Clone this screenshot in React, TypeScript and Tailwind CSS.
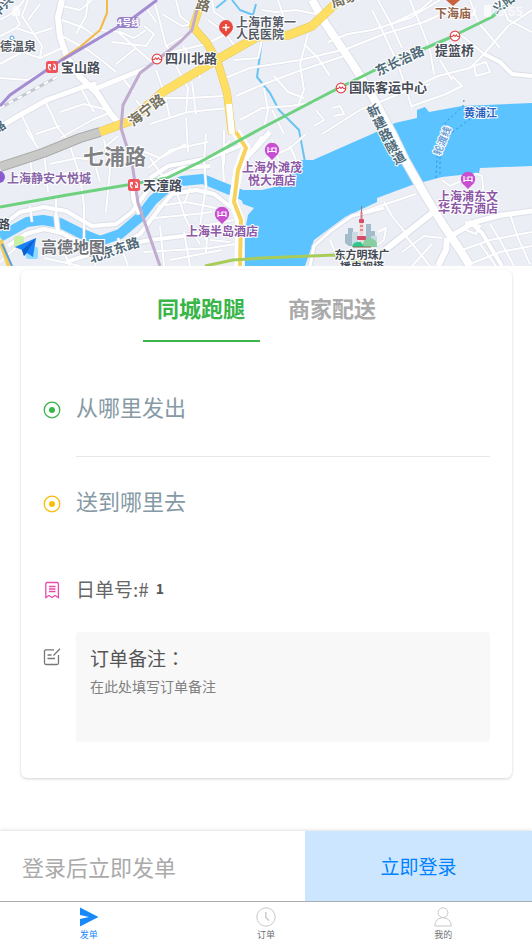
import { useState } from "react";
import type { ReactNode } from "react";

// minor streets, thin white
const streets = [
  "M0 20 L14 12 L24 0", "M0 36 L16 28 L34 34 L52 28", "M0 64 L22 52 L40 58 L62 48", "M14 12 L20 24 L16 28",
  "M28 0 L22 16 L34 34", "M0 78 L28 80 L52 66", "M34 34 L42 46 L40 58", "M40 4 L28 20", "M62 20 L84 28 L100 40",
  "M62 36 L88 50 L104 62 L116 72", "M62 6 L80 10 L92 0", "M88 0 L86 16 L76 34", "M100 30 L120 32 L134 38 L146 30",
  "M112 42 L146 46 L154 34 L144 26", "M118 32 L138 50 L154 64", "M136 48 L116 64", "M154 0 L160 22 L166 46 L176 56",
  "M162 14 L182 26 L194 24", "M146 8 L156 22", "M176 0 L180 16 L190 24", "M166 46 L184 36", "M172 52 L206 44 L234 30",
  "M183 46 L192 60", "M208 20 L224 32 L238 50", "M212 0 L214 12 L232 24", "M156 70 L164 92 L170 118",
  "M176 66 L188 88 L186 112", "M192 82 L196 114", "M160 98 L188 98 L224 96", "M150 124 L188 112 L228 108",
  "M196 60 L200 78", "M46 103 L58 128 L66 138", "M22 116 L34 140", "M82 90 L94 112", "M60 112 L84 104 L108 110",
  "M60 138 L92 120 L112 112", "M124 80 L134 92", "M80 79 L96 90 L140 72", "M136 100 L150 118", "M36 134 L60 126",
  "M236 96 L264 84 L296 72 L350 54", "M225 78 L250 68 L300 60 L350 48", "M234 60 L258 58 L262 40",
  "M240 120 L262 108 L290 106 L316 102", "M264 128 L268 110 L264 88", "M284 134 L272 110", "M308 34 L300 64 L304 90 L298 106",
  "M274 76 L288 92 L304 98", "M304 44 L318 58 L330 76", "M262 10 L276 12 L296 10 L316 14", "M278 0 L286 24",
  "M322 134 L360 110 L404 92 L430 84", "M328 42 L348 34 L372 30 L410 18 L440 0", "M344 50 L384 34 L424 22 L446 12",
  "M378 0 L390 22 L402 48", "M372 10 L382 30 L398 64 L412 108", "M410 0 L420 24 L430 50 L434 74",
  "M392 24 L420 10 L432 0", "M404 92 L438 76 L470 68 L484 54", "M412 106 L446 94 L462 86 L452 76", "M440 60 L452 80",
  "M454 30 L470 42 L484 54", "M470 0 L478 22 L500 48", "M500 0 L508 20 L532 32", "M484 54 L508 26 L532 10",
  "M474 66 L486 62 L490 72 L476 76 Z", "M332 108 L340 106 L344 114 L334 116", "M316 110 L324 120 L314 126",
  // south of 海宁路
  "M30 160 L34 186", "M44 152 L48 192", "M50 164 L78 158 L92 160", "M48 178 L80 170", "M70 146 L80 176 L84 206 L84 240",
  "M104 140 L110 170 L106 212", "M92 154 L100 182", "M118 136 L104 148", "M30 206 L32 222", "M56 196 L56 224",
  "M26 130 L38 148", "M140 150 L160 158 L186 144", "M148 168 L170 150 L208 142",
  "M206 134 L204 160 L206 186 L200 226 L206 240", "M186 118 L188 152", "M224 130 L224 164", "M230 140 L222 150 L224 182",
  "M150 158 L164 178", "M158 206 L186 202 L216 208", "M154 218 L196 214 L212 212", "M176 190 L186 220 L200 244",
  "M190 188 L184 204", "M202 226 L234 220", "M210 240 L230 242", "M160 226 L164 266", "M184 232 L190 266",
  "M208 226 L206 252", "M144 252 L210 248 L236 244", "M90 250 L96 266", "M64 252 L70 266", "M44 258 L80 266",
  "M118 238 L128 266", "M170 260 L222 250", "M0 262 L22 242", "M264 160 L290 148 L306 134", "M250 152 L262 136",
  "M272 140 L280 164", "M290 146 L296 160",
  // pudong
  "M384 202 L392 216 L408 236", "M352 216 L380 206 L416 194", "M330 240 L336 254", "M404 234 L414 246 L430 266",
  "M378 232 L386 228 L384 240 L376 246", "M402 252 L424 236 L442 238", "M412 266 L432 244",
  "M442 180 L450 186 L476 174 L482 176", "M484 198 L482 176", "M484 198 L492 210 L500 216",
  "M466 222 L480 226 L476 234 L466 230 Z", "M462 250 L490 240 L532 232", "M470 264 L500 252 L532 246",
  "M490 224 L500 240 L514 266", "M510 214 L518 238 L530 264", "M480 244 L496 266",
];

// wider white roads: [path, width]
const avenues: [string, number][] = [
  ["M62 0 L58 17 L60 37 L67 57 L80 77 L97 93 L110 113 L120 125", 6],
  ["M0 127 L20 115 L47 100 L83 87 L96 84", 5],
  ["M90 90 L147 67", 3],
  ["M312 0 L325 23 L352 63 L369 90 L392 133 L405 160 L422 190 L442 223 L462 253 L470 266", 8],
  ["M385 250 L408 232 L432 213", 6],
  ["M449 237 L475 222 L502 215 L532 211", 5],
  ["M447 238 L446 250 L438 266", 6],
  ["M469 221 L482 233 L502 266", 4],
  ["M484 54 L500 62 L512 74 L532 76", 4],
  ["M0 227 L20 212 L44 207 L66 211 L92 226 L116 224 L132 212 L148 190 L160 178 L182 168 L210 166", 4],
  ["M8 246 L26 234 L44 229 L62 233 L92 249 L118 247 L140 234 L160 208 L172 194 L196 190 L214 194 L232 208", 4],
  ["M56 214 L58 234", 4],
  ["M66 262 L110 248 L150 240 L200 234", 4],
  ["M270 132 L248 156 L236 176", 5],
  ["M150 178 L168 166 L210 158 L240 146", 4],
  ["M132 180 L134 200 L140 214", 5],
  ["M310 266 L314 246 L332 230 L352 216 L384 208", 3],
];

type MapText = { x: number; y: number; size: number; fill: string; text: string; rotate?: number; anchor?: "middle" };

const mapTexts: MapText[] = [
  { x: 0, y: 51, size: 12, fill: "#555b67", text: "德温泉" },
  { x: 61, y: 72, size: 13, fill: "#484d5a", text: "宝山路" },
  { x: 165, y: 63, size: 13, fill: "#484d5a", text: "四川北路" },
  { x: 236, y: 27, size: 12, fill: "#555b67", text: "上海市第一" },
  { x: 236, y: 39, size: 12, fill: "#555b67", text: "人民医院" },
  { x: 435, y: 55, size: 13, fill: "#484d5a", text: "提篮桥" },
  { x: 349, y: 92, size: 13, fill: "#484d5a", text: "国际客运中心" },
  { x: 435, y: 18, size: 12, fill: "#96654b", text: "下海庙" },
  { x: 83, y: 164, size: 21, fill: "#808286", text: "七浦路" },
  { x: 143, y: 190, size: 13, fill: "#484d5a", text: "天潼路" },
  { x: 7, y: 183, size: 12, fill: "#8765a6", text: "上海静安大悦城" },
  { x: 272, y: 172, size: 12, fill: "#8d58a6", text: "上海外滩茂", anchor: "middle" },
  { x: 272, y: 185, size: 12, fill: "#8d58a6", text: "悦大酒店", anchor: "middle" },
  { x: 222, y: 236, size: 12, fill: "#8d58a6", text: "上海半岛酒店", anchor: "middle" },
  { x: 468, y: 201, size: 12, fill: "#8d58a6", text: "上海浦东文", anchor: "middle" },
  { x: 468, y: 213, size: 12, fill: "#8d58a6", text: "华东方酒店", anchor: "middle" },
  { x: 362, y: 259, size: 11, fill: "#454b57", text: "东方明珠广", anchor: "middle" },
  { x: 362, y: 271, size: 11, fill: "#454b57", text: "播电视塔", anchor: "middle" },
  { x: -2, y: 229, size: 12, fill: "#454b57", text: "路" },
  { x: 464, y: 117, size: 11, fill: "#2c62bd", text: "黄浦江" },
  { x: 133, y: 127, size: 14, fill: "#77725e", text: "海宁路", rotate: -38 },
  { x: 195, y: 8, size: 14, fill: "#77725e", text: "路", rotate: 15 },
  { x: 333, y: 8, size: 14, fill: "#77725e", text: "周家", rotate: -20 },
  { x: 378, y: 76, size: 13, fill: "#4f6a78", text: "东长治路", rotate: -25 },
  { x: 91, y: 263, size: 13, fill: "#4f6a78", text: "北京东路", rotate: -19 },
  { x: -3, y: 18, size: 12, fill: "#4f6a78", text: "中兴", rotate: -45 },
  { x: -3, y: 134, size: 12, fill: "#4f6a78", text: "路", rotate: -35 },
  { x: 496, y: 14, size: 12, fill: "#4f6a78", text: "义阳", rotate: -35 },
  { x: 440, y: 156, size: 10, fill: "#6f9fd6", text: "轮渡线", rotate: -68 },
];

const tunnel = [["新", 376, 115], ["建", 382, 127], ["路", 388, 139], ["隧", 394, 151], ["道", 401, 162]] as const;

function Hotel({ x, y }: { x: number; y: number }) {
  return (
    <g transform={`translate(${x} ${y})`}>
      <path d="M0 10 L-4 6 A7.2 7.2 0 1 1 4 6 Z" fill="#c84fd0" />
      <path d="M-4 -3 V3 M-4 1.5 H4 M4 3 V-2 H0 V1 M-2.5 -1 h1" stroke="#fff" strokeWidth="1.2" fill="none" />
    </g>
  );
}

function Metro({ x, y }: { x: number; y: number }) {
  return (
    <g transform={`translate(${x} ${y})`} fill="none" stroke="#e5484d">
      <circle r="4.8" fill="#fff" strokeWidth="1.2" />
      <path d="M-5 .5 H-2.6 L-1.3 -1.2 L0 .6 L1.3 -1.2 L2.6 .5 H5" strokeWidth="1.1" />
    </g>
  );
}

function Transfer({ x, y }: { x: number; y: number }) {
  return (
    <g transform={`translate(${x} ${y})`}>
      <rect x="-6" y="-6" width="12" height="12" rx="2.5" fill="#f0525a" />
      <path d="M-1.5 3.2 A3.5 3.5 0 0 1 -2.6 -2.4 M1.5 -3.2 A3.5 3.5 0 0 1 2.6 2.4" stroke="#fff" strokeWidth="1.3" fill="none" />
      <path d="M-4.4 -3 H-1 V.4 Z M4.4 3 H1 V-.4 Z" fill="#fff" />
    </g>
  );
}

function CityMap() {
  return (
    <svg className="block h-[266px] w-full bg-[#eceef5]" viewBox="0 0 532 266" preserveAspectRatio="xMidYMid slice" role="img" aria-label="地图">
      <g fill="none" strokeLinejoin="round">
        <path d="M372 134 L395 123 L417 118 V110 L425 107 L429 112 L462 106 L532 103 V166 L480 168 L479 173 L442 177 L412 185 L377 198 V202 L345 217 L314 240 L305 266 H245 V230 L248 215 L254 208 L243 204 L238 190 L262 190 L287 184 L295 167 L302 160 L313 160 Z" fill="#5bc3ff" />
        <path d="M0 237 L27 222 L43 220 L60 223 L80 233 L100 241 L120 234 L140 217 L153 200 L167 188 L182 181 L203 179 L220 186 L247 197" stroke="#5bc3ff" strokeWidth="10" />
        <path d="M262 40 L257 77 L270 93 L279 110 L299 130 L305 162 M216 8 L226 0 M232 0 L240 10 L253 15 L256 4" stroke="#69c4f2" strokeWidth="2" />

        <g stroke="#dcdfe8">
          {streets.map((d) => <path key={d} d={d} strokeWidth="3" />)}
          {avenues.map(([d, w]) => <path key={d} d={d} strokeWidth={w + 2} />)}
        </g>
        <g stroke="#fff">
          {streets.map((d) => <path key={d} d={d} strokeWidth="2" />)}
          {avenues.map(([d, w]) => <path key={d} d={d} strokeWidth={w} />)}
        </g>

        <path d="M0 108 L57 77" stroke="#c3c8d0" strokeWidth="3" />
        <path d="M0 108 L57 77" stroke="#fff" strokeWidth="2" strokeDasharray="5 5" />
        <path d="M0 167 L43 153 L80 138 L100 132" stroke="#ababab" strokeWidth="10" />
        <path d="M0 167 L43 153 L80 138 L100 132" stroke="#c9c9c7" strokeWidth="8" />
        <g stroke="#e3c463">
          <path d="M100 132 L130 121 L163 92 L213 62 L257 37 L289 35 L312 26 L332 7 L342 -2" strokeWidth="9" />
          <path d="M202 0 L193 27 L207 43 L218 63 L227 93 L232 134" strokeWidth="8" />
        </g>
        <g stroke="#ffdf62">
          <path d="M100 132 L130 121 L163 92 L213 62 L257 37 L289 35 L312 26 L332 7 L342 -2" strokeWidth="8" />
          <path d="M202 0 L193 27 L207 43 L218 63 L227 93 L232 134" strokeWidth="7" />
        </g>
        <path d="M229 104 L232 134" stroke="#fff" strokeWidth="6" />
        <path d="M236 132 L246 148 L238 170 L233 202 L240 220 L239 266" stroke="#fff" strokeWidth="9" />
        <path d="M236 132 L246 148 L238 170 L234 202 L241 220 L240 266" stroke="#f7d35e" strokeWidth="4" />
        <path d="M0 240 L6 256 L9 266" stroke="#f5cf5c" strokeWidth="5" />
        <path d="M2 244 L12 266" stroke="#5a9fe0" strokeWidth="2" />

        <path d="M107 0 V13 L100 30 L80 47 L60 60" stroke="#f3ba45" strokeWidth="2" />
        <path d="M157 0 L133 18 L57 63 L10 95 L0 106" stroke="#a48cd2" strokeWidth="3" />
        <path d="M198 6 L192 30 L180 42 L157 60 L140 73 L123 105 L121 128 L132 163 L138 203 L160 266" stroke="#bfaccf" strokeWidth="3" />
        <path d="M0 207 L67 195 L133 184 L167 178 L200 162 L262 128 L329 93 L379 68 L449 38 L492 17 L512 0" stroke="#6ed180" strokeWidth="3" />
        <path d="M205 266 L233 260 L262 258 L335 255 L352 260 L372 266" stroke="#a9cc58" strokeWidth="3" />
        <path d="M464 100 L463 106 L446 122 L438 138 L436 178" stroke="#338fd2" strokeDasharray="2 3" />
        <path d="M474 116 L450 134 L440 156 L440 176" stroke="#338fd2" strokeDasharray="2 3" />
        <circle cx="447" cy="130" r="4" stroke="#e5f5ff" fill="#6aaee0" />
      </g>

      <rect x="117" y="17" width="23" height="11" rx="4" fill="#9a83c9" />
      <circle cx="12" cy="38" r="2" fill="#fff" stroke="#4c9ed2" />
      <path d="M226 37 L221 32 A7 7 0 1 1 231 32 Z" fill="#e8473c" />
      <path d="M226 24 V31 M222.5 27.5 H229.5" stroke="#fff" strokeWidth="1.5" />
      <path d="M446 0 H460 L453 6 Z" fill="#c8623d" />
      <circle cx="-1" cy="177" r="6" fill="#8d5bd0" />
      <Transfer x={52} y={67} />
      <Transfer x={134} y={185} />
      <Metro x={157} y={59} />
      <Metro x={341} y={88} />
      <Metro x={455} y={36} />
      <Hotel x={272} y={150} />
      <Hotel x={222} y={214} />
      <Hotel x={468} y={179} />

      {/* 东方明珠 */}
      <path d="M345 243 V234 H348 V228 H353 V234 H357 V246 H349 Z M366 246 V224 H371 V231 H375 V246 Z" fill="#a3bccb" />
      <path d="M352 246 V232 H358 V246 Z M371 246 V236 H377 V246 Z" fill="#cbdbe3" />
      <path d="M363 247 Q362 239 368 238 Q378 238 377 247 Z" fill="#86cfa0" />
      <path d="M352 247 Q353 242 358 242 Q362 241 364 247 Z" fill="#2fc78c" />
      <path d="M361.5 206 V220" stroke="#8d7c86" />
      <path d="M361.5 212 V220" stroke="#d77f8c" strokeWidth="2" />
      <path d="M359.5 222 H363.5 V242 H359.5 Z" fill="#f2d7d0" />
      <path d="M360 225 H363 V227 H360 Z M360 229 H363 V231 H360 Z" fill="#e08a90" />
      <rect x="359" y="219" width="5" height="4" rx="1" fill="#d54d6b" />
      <rect x="357" y="236" width="9" height="4" rx="1" fill="#d54d6b" />
      <path d="M353 247 H371" stroke="#8b6b4b" />

      <g className="font-['Noto_Sans_CJK_SC',sans-serif] font-bold" stroke="#fff" strokeWidth="2" paintOrder="stroke" strokeLinejoin="round">
        {mapTexts.map((t) => (
          <text key={t.text + t.x + t.y} x={t.x} y={t.y} fontSize={t.size} fill={t.fill} textAnchor={t.anchor} transform={t.rotate ? `rotate(${t.rotate} ${t.x} ${t.y})` : undefined}>
            {t.text}
          </text>
        ))}
        {tunnel.map(([c, x, y]) => (
          <text key={c} x={x} y={y} fontSize="13" fill="#4f6a78" textAnchor="middle" transform={`rotate(-28 ${x} ${y})`}>{c}</text>
        ))}
        <text x="128.5" y="26" fontSize="9" fill="#fff" stroke="none" textAnchor="middle">4号线</text>
      </g>

      {/* status bar */}
      <g fill="#fff" opacity="0.75">
        <path d="M12 8 L16 5 L20 9 V16 H12 Z M470 16 L476 6 V16 Z" />
        <rect x="484" y="5" width="7" height="12" rx="2" />
        <text x="497" y="16" fontSize="13" className="font-[Roboto,sans-serif] font-medium">8:55</text>
      </g>

      {/* map provider */}
      <rect x="14" y="236" width="10" height="12" rx="2" fill="#c9f0a4" />
      <rect x="26" y="247" width="12" height="12" rx="2" fill="#8fdcff" />
      <path d="M36 238 L15 247 L22 250 L24 256 L27 253 L33 257 Z" fill="#1b80f5" />
      <path d="M36 238 L22 250 L24 256 L27 252 Z" fill="#0b5fd0" />
      <text x="41" y="253" fontSize="16" fill="#70747a" stroke="#fff" strokeWidth="2" paintOrder="stroke" className="font-['Noto_Sans_CJK_SC',sans-serif] font-bold">高德地图</text>
    </svg>
  );
}

function Target({ className }: { className: string }) {
  return (
    <svg className={`size-[18px] shrink-0 ${className}`} viewBox="0 0 18 18" aria-hidden="true">
      <circle cx="9" cy="9" r="7.8" fill="none" stroke="currentColor" strokeWidth="1.3" />
      <circle cx="9" cy="9" r="3" fill="currentColor" />
    </svg>
  );
}

function AddressRow({ icon, children }: { icon: ReactNode; children: ReactNode }) {
  return (
    <button type="button" className="flex h-[93px] w-full items-center gap-[15px] text-left text-[22px] text-[#869aa5]">
      {icon}
      <span className="pb-1.5">{children}</span>
    </button>
  );
}

const modes = ["同城跑腿", "商家配送"];

export default function App() {
  const [mode, setMode] = useState(0);

  return (
    <div className="flex min-h-screen flex-col bg-white font-['Noto_Sans_CJK_SC',sans-serif]">
      <CityMap />

      <main className="mt-1 mr-5 ml-[21px] rounded-md px-[22px] pb-9 shadow-[0_1px_3px_rgba(0,0,0,0.18)]">
        <div className="flex justify-center gap-[14px]">
          {modes.map((name, i) => (
            <button
              key={name}
              type="button"
              onClick={() => setMode(i)}
              className={`h-[72px] w-[117px] border-b-2 pt-1 text-[22px] font-bold ${mode === i ? "border-[#39b54a] text-[#39b54a]" : "border-transparent text-[#aaaaaa]"}`}
            >
              {name}
            </button>
          ))}
        </div>

        <div className="mt-[21px]">
          <AddressRow icon={<Target className="text-[#39b54a]" />}>从哪里发出</AddressRow>
          <div className="ml-[33px] h-px bg-[#e8e8e8]" />
          <AddressRow icon={<Target className="text-[#fbbd08]" />}>送到哪里去</AddressRow>
        </div>

        <div className="mt-4 flex h-12 items-center gap-[15px]">
          <svg className="size-[18px] shrink-0" viewBox="0 0 18 18" fill="none" stroke="#e54dac" strokeWidth="1.3" aria-hidden="true">
            <path d="M2.8 2.8 Q2.8 1.5 4 1.5 H14.2 Q15.4 1.5 15.4 2.8 V16.5 L12 14.5 L9 16.5 L6 14.5 L2.8 16.5 Z M6 5.5 H12.5 M6 8 H12.5 M6 10.5 H12.5" />
          </svg>
          <label htmlFor="daily" className="pb-0.5 text-[19px] text-[#666666]">日单号:#</label>
          <input id="daily" defaultValue="1" className="-ml-2 min-w-0 flex-1 pb-1 text-sm font-bold text-[#555555] outline-none" />
        </div>

        <div className="mt-[18px] flex gap-[15px]">
          <svg className="mt-4 size-[18px] shrink-0" viewBox="0 0 18 18" fill="none" stroke="#777" strokeWidth="1.3" aria-hidden="true">
            <path d="M11 1.8 H3 Q1.5 1.8 1.5 3.3 V15 Q1.5 16.5 3 16.5 H14 Q15.5 16.5 15.5 15 V7 M17 .8 L10.5 7.5 M4.5 7 H8.5 M4.5 10.5 H12" />
          </svg>
          <div className="flex h-[110px] min-w-0 flex-1 flex-col rounded bg-[#f8f8f8] px-[14px] pt-[11px]">
            <label htmlFor="remark" className="text-[19px] leading-[30px] text-[#555555]">
              订单备注<span className="font-['Noto_Sans_CJK_TC',sans-serif]" lang="zh-TW">：</span>
            </label>
            <textarea id="remark" placeholder="在此处填写订单备注" className="mt-[3px] flex-1 resize-none text-sm leading-5 outline-none placeholder:text-[#808080]" />
          </div>
        </div>
      </main>

      <footer className="mt-auto pt-6">
        <div className="flex h-[70px] shadow-[0_-1px_3px_rgba(0,0,0,0.12)]">
          <p className="flex flex-1 items-center pl-[22px] text-[22px] text-[#aaaaaa]">登录后立即发单</p>
          <button type="button" className="w-[227px] bg-[#cce6ff] text-[19px] text-[#0081ff]">立即登录</button>
        </div>
        <nav className="grid h-[45px] grid-cols-3 border-t border-[#a9adb0] text-[9px] leading-3 text-[#6d6f76]">
          <a href="#send" className="flex flex-col items-center gap-0.5 pt-[5px] text-[#1989fa]">
            <svg className="size-5" viewBox="0 0 20 20" fill="currentColor" aria-hidden="true">
              <path d="M1 .5 L19.5 10 L1 19.5 V12 L10 10 L1 8 Z" />
            </svg>
            发单
          </a>
          <a href="#orders" className="flex flex-col items-center gap-0.5 pt-[5px]">
            <svg className="size-5" viewBox="0 0 20 20" fill="none" stroke="#c8c8c8" aria-hidden="true">
              <circle cx="10" cy="10" r="9.2" />
              <path d="M9.8 5 V10.5 L13 13.5" strokeWidth="1.4" />
            </svg>
            订单
          </a>
          <a href="#mine" className="flex flex-col items-center gap-0.5 pt-[5px]">
            <svg className="size-5" viewBox="0 0 20 20" fill="none" stroke="#c8c8c8" aria-hidden="true">
              <circle cx="10" cy="5.7" r="4.9" />
              <path d="M1.8 19 C1.8 8 18.2 8 18.2 19 Z" />
            </svg>
            我的
          </a>
        </nav>
      </footer>
    </div>
  );
}
